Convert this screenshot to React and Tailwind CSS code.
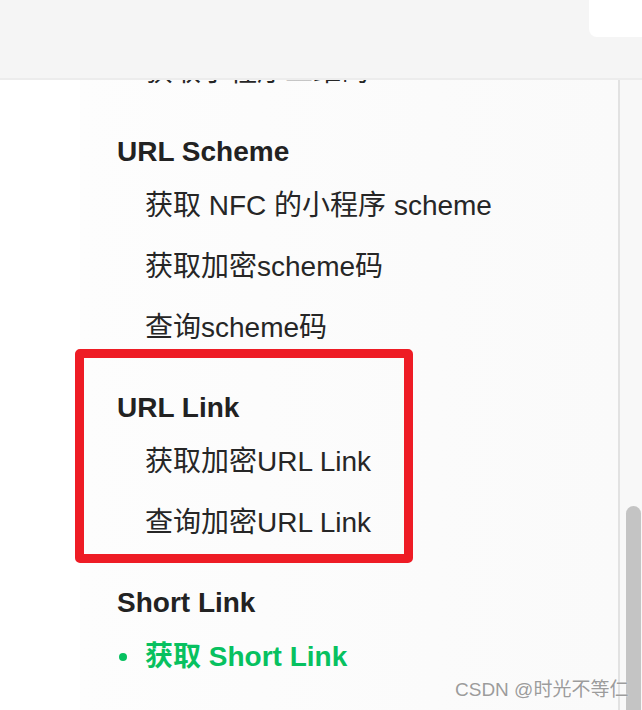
import React from 'react';

const font = { fontFamily: '"Liberation Sans", "Noto Sans CJK SC", sans-serif' };

const Item = ({ children, clipped }) => (
  <div className={`h-[61px] flex items-center pl-[28px] text-[28px] text-[#262626] whitespace-nowrap ${clipped ? '-mt-[39px]' : ''}`}>
    {children}
  </div>
);

const Heading = ({ children }) => (
  <div className="h-[46px] mt-[27px] flex items-center text-[28px] font-bold text-[#222222] whitespace-nowrap">
    {children}
  </div>
);

export default function App() {
  return (
    <div className="relative w-[642px] h-[710px] overflow-hidden bg-white" style={font}>
      {/* Top bar */}
      <div className="h-[80px] bg-[#f5f5f5] border-b-2 border-[#ececec] flex justify-end">
        <div className="w-[53px] h-[37px] bg-white rounded-bl-[8px]"></div>
      </div>

      <div className="flex h-[630px]">
        <div className="w-[80px] bg-white"></div>

        {/* Doc menu */}
        <div className="flex-1 overflow-hidden pl-[37px] bg-gradient-to-r from-[#fdfdfd] to-[#fafafa]">
          <Item clipped>获取小程序二维码</Item>

          <Heading>URL Scheme</Heading>
          <Item>获取 NFC 的小程序 scheme</Item>
          <Item>获取加密scheme码</Item>
          <Item>查询scheme码</Item>

          <Heading>URL Link</Heading>
          <Item>获取加密URL Link</Item>
          <Item>查询加密URL Link</Item>

          <Heading>Short Link</Heading>
          <div className="h-[61px] flex items-center pl-[2px] text-[28px] font-bold text-[#07c160] whitespace-nowrap">
            <span className="w-[8px] h-[8px] rounded-full bg-[#07c160]"></span>
            <span className="ml-[18px]">获取 Short Link</span>
          </div>
        </div>

        {/* Scroll track */}
        <div className="w-[24px] border-l-2 border-[#e2e2e2] bg-[#f8f8f8] pl-[6px]">
          <div className="mt-[426px] w-[15px] h-[220px] rounded-t-full bg-[#c4c4c4]"></div>
        </div>
      </div>

      {/* Annotation box */}
      <div className="absolute left-[75px] top-[349px] w-[338px] h-[214px] border-[9px] border-[#ee1c25] rounded-[5px]"></div>

      {/* Watermark */}
      <div className="absolute left-[455px] top-[679px] text-[19px] leading-[22px] text-[#9c9c9c] whitespace-nowrap [text-shadow:0_0_2px_#ffffff]">
        CSDN @时光不等仁
      </div>
    </div>
  );
}
